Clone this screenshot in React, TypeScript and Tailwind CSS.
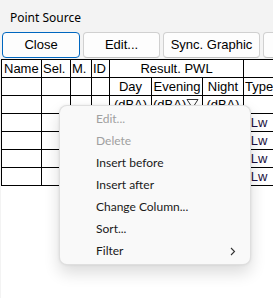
import React from "react";

const cols = "grid grid-cols-[40px_29px_21px_18px_42px_51px_41px_31px_40px]";
const cell = "h-[18px] border-r border-b border-black leading-[17px] text-[13px] whitespace-nowrap overflow-hidden";

const menuItems = [
  { label: "Edit...", disabled: true },
  { label: "Delete", disabled: true },
  { label: "Insert before" },
  { label: "Insert after" },
  { label: "Change Column..." },
  { label: "Sort..." },
  { label: "Filter", sub: true },
];

function Btn({ children, focused, className }: { children?: React.ReactNode; focused?: boolean; className?: string }) {
  return (
    <div
      className={
        "h-[26px] shrink-0 rounded-[4px] bg-[#fdfdfd] flex items-center justify-center text-[13px] text-black " +
        (focused ? "border border-[#0067c0] " : "border border-[#d0d0d0] border-b-[#c0c0c0] ") +
        (className ?? "")
      }
    >
      {children}
    </div>
  );
}

export default function App() {
  return (
    <div
      className="relative w-[273px] h-[298px] overflow-hidden bg-[#f3f3f3]"
      style={{ fontFamily: '"Liberation Sans", Arial, sans-serif' }}
    >
      {/* title */}
      <div className="h-[32px] pl-[10px] flex items-center pt-[3px] text-[12px] text-black font-['Noto_Sans',sans-serif]">
        Point Source
      </div>

      {/* toolbar */}
      <div className="flex gap-[3px] pl-[2px] h-[27px]">
        <Btn focused className="w-[78px]">Close</Btn>
        <Btn className="w-[77px]">Edit...</Btn>
        <Btn className="w-[97px]">Sync. Graphic</Btn>
        <Btn className="w-[60px]" />
      </div>

      {/* content */}
      <div className="ml-[1px] bg-white h-[239px]">
        <div className={cols + " border-l border-t border-black w-[315px]"}>
          <div className={cell + " pl-[2px]"}>Name</div>
          <div className={cell + " pl-[1px]"}>Sel.</div>
          <div className={cell + " pl-[1px]"}>M.</div>
          <div className={cell + " pl-[1px]"}>ID</div>
          <div className={cell + " col-span-3 text-center"}>Result. PWL</div>
          <div className={cell}></div>
          <div className={cell}></div>

          <div className={cell}></div>
          <div className={cell}></div>
          <div className={cell}></div>
          <div className={cell}></div>
          <div className={cell + " text-center"}>Day</div>
          <div className={cell + " text-center"}>Evening</div>
          <div className={cell + " text-center"}>Night</div>
          <div className={cell + " pl-[1px]"}>Type</div>
          <div className={cell}></div>

          <div className={cell}></div>
          <div className={cell}></div>
          <div className={cell}></div>
          <div className={cell}></div>
          <div className={cell + " text-center"}>(dBA)</div>
          <div className={cell + " relative pl-[1px]"}>
            (dBA)
            <svg className="absolute left-[34px] top-[2px] bg-white" width="13" height="11" viewBox="0 0 13 11">
              <path d="M1 1.5 H12 L6.5 10 Z" fill="white" stroke="#333" strokeWidth="1" />
            </svg>
          </div>
          <div className={cell + " text-center"}>(dBA)</div>
          <div className={cell}></div>
          <div className={cell}></div>

          {[0, 1, 2, 3].map((r) => (
            <React.Fragment key={r}>
              <div className={cell}></div>
              <div className={cell}></div>
              <div className={cell}></div>
              <div className={cell}></div>
              <div className={cell}></div>
              <div className={cell}></div>
              <div className={cell}></div>
              <div className={cell + " text-center text-[#1a1040]"}>Lw</div>
              <div className={cell}></div>
            </React.Fragment>
          ))}
        </div>
      </div>

      {/* context menu */}
      <div className="absolute left-[59px] top-[105px] w-[192px] rounded-[8px] bg-[#f9f9f9] border border-black/10 pt-[2px] pb-[2px] shadow-[0_8px_16px_rgba(0,0,0,0.14),0_0_3px_rgba(0,0,0,0.08)] font-['Lato',sans-serif]">
        {menuItems.map((m) => (
          <div
            key={m.label}
            className={
              "h-[22px] flex items-center pl-[36px] pr-[14px] text-[12px] " +
              (m.disabled ? "text-[#a0a0a0]" : "text-[#1a1a1a]")
            }
          >
            <span className="flex-1">{m.label}</span>
            {m.sub && (
              <svg width="6" height="9" viewBox="0 0 6 9">
                <path d="M1 1 L4.5 4.5 L1 8" fill="none" stroke="#333" strokeWidth="1.1" />
              </svg>
            )}
          </div>
        ))}
      </div>
    </div>
  );
}
